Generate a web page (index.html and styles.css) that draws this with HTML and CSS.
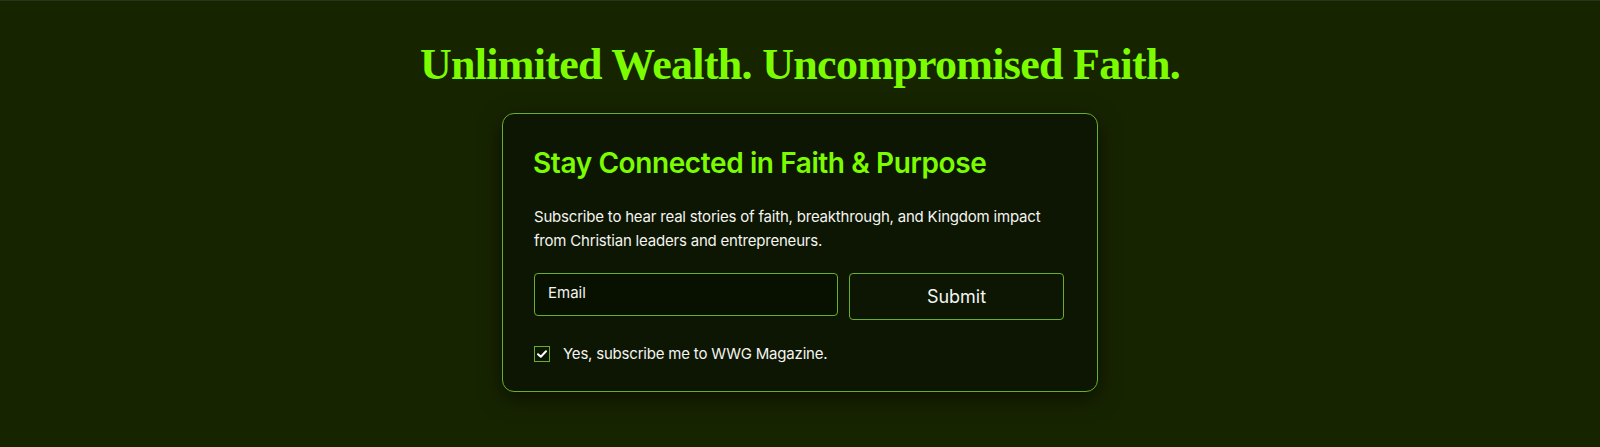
FILE: index.html
```html
<!DOCTYPE html>
<html lang="en">
<head>
    <meta charset="UTF-8">
    <meta name="viewport" content="width=device-width, initial-scale=1.0">
    <title>Stay Connected</title>
    <link rel="stylesheet" href="styles.css">
</head>
<body>
    <section class="signup">
        <h1 class="tagline">Unlimited Wealth. Uncompromised Faith.</h1>

        <div class="card">
            <h2>Stay Connected in Faith &amp; Purpose</h2>
            <p>Subscribe to hear real stories of faith, breakthrough, and Kingdom impact from Christian leaders and entrepreneurs.</p>

            <form class="signup-form">
                <input type="email" class="email" placeholder="Email">
                <button type="button" class="submit">Submit</button>
            </form>

            <label class="optin">
                <span class="box">
                    <svg width="10" height="8" viewBox="0 0 10 8">
                        <path d="M1 4.2 L3.8 6.8 L9 1.2" fill="none" stroke="#fff" stroke-width="2" stroke-linecap="round" stroke-linejoin="round"/>
                    </svg>
                </span>
                Yes, subscribe me to WWG Magazine.
            </label>
        </div>
    </section>
</body>
</html>
```

FILE: styles.css
```css
body {
    margin: 0;
    background-color: #172400;
    border-top: 1px solid #2b3320;
    font-family: Inter, "Noto Sans", sans-serif;
    color: #f4f4f0;
    height: 446px;
}

.signup {
    padding-top: 36px;
}

.tagline {
    margin: 0 0 20px;
    text-align: center;
    font-family: "Liberation Serif", serif;
    font-weight: bold;
    font-size: 44px;
    letter-spacing: -0.7px;
    line-height: 56px;
    color: #7cfc00;
}

.card {
    box-sizing: border-box;
    width: 596px;
    margin: 0 auto;
    padding: 32px 32px 28px 31px;
    border: 1px solid #6cae2a;
    border-radius: 12px;
    background-color: #0d1603;
    box-shadow: 0 6px 22px rgba(0, 0, 0, 0.55);
}

.card h2 {
    margin: 0 0 0 -1px;
    font-size: 28px;
    font-weight: 600;
    letter-spacing: -0.4px;
    color: #7cfc00;
}

.card p {
    margin: 25px 0 0;
    font-size: 15px;
    line-height: 24px;
    letter-spacing: -0.2px;
}

.signup-form {
    display: flex;
    align-items: flex-start;
    gap: 11px;
    margin-top: 20px;
}

.email {
    box-sizing: border-box;
    width: 304px;
    height: 43px;
    padding: 0 13px 4px;
    border: 1px solid #6cae2a;
    border-radius: 4px;
    background-color: #081000;
    font-family: inherit;
    font-size: 15px;
    color: #fff;
}

.email::placeholder {
    color: #f4f4f0;
}

.submit {
    box-sizing: border-box;
    width: 215px;
    height: 47px;
    border: 1px solid #6cae2a;
    border-radius: 4px;
    background-color: #0d1603;
    font-family: inherit;
    font-size: 18px;
    color: #f4f4f0;
    cursor: pointer;
}

.optin {
    display: flex;
    align-items: center;
    gap: 13px;
    margin-top: 25px;
    font-size: 15px;
    line-height: 18px;
    letter-spacing: -0.2px;
}

.box {
    box-sizing: border-box;
    display: flex;
    align-items: center;
    justify-content: center;
    width: 16px;
    height: 16px;
    border: 1px solid #6cae2a;
    background-color: #0d1603;
}
```
